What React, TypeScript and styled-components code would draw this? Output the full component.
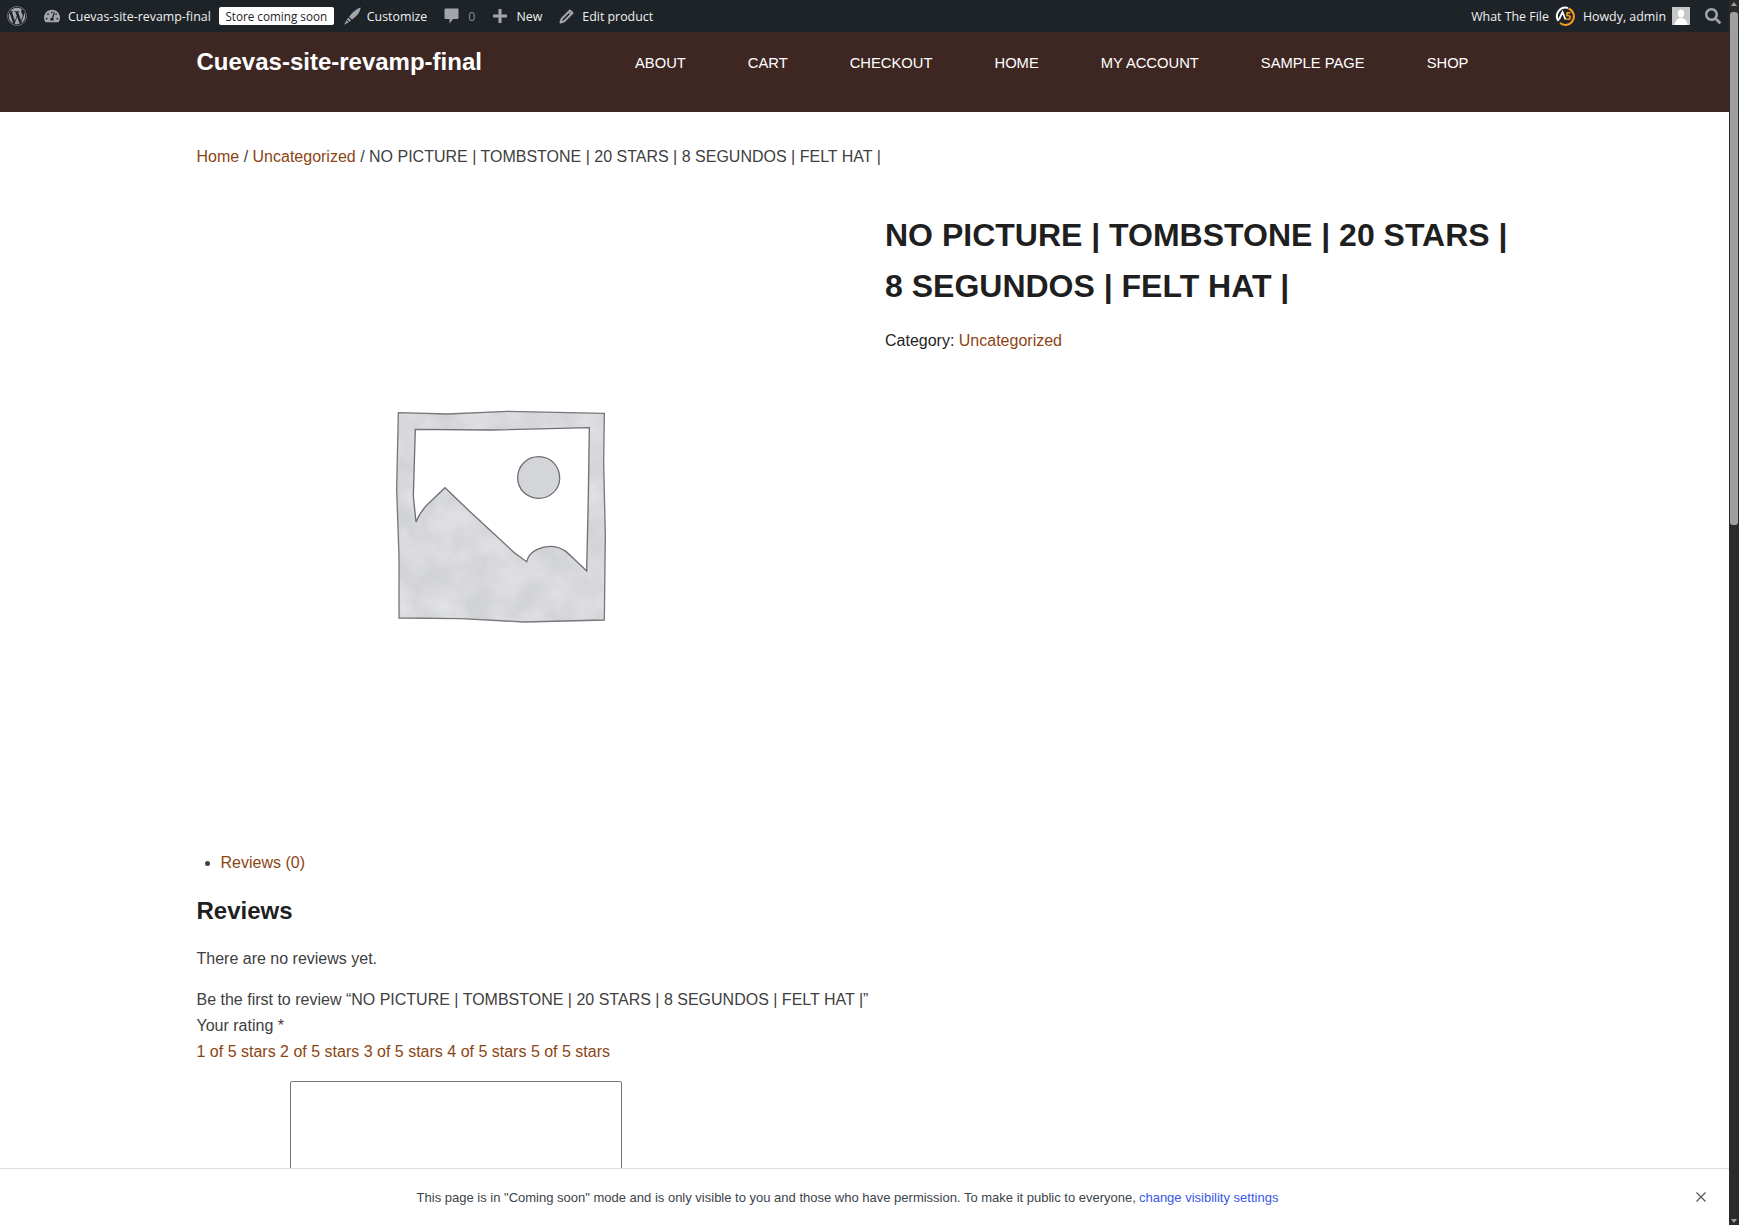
import React from "react";
import styled, { createGlobalStyle } from "styled-components";
import { FaWordpress, FaTachometerAlt, FaSearch } from "react-icons/fa";

const Global = createGlobalStyle`
  html, body {
    margin: 0;
    height: 100%;
    overflow: hidden;
    background: #fff;
  }
  * { box-sizing: border-box; }
`;

const AdminBar = styled.div`
  height: 32px;
  background: #1d2327;
  display: flex;
  align-items: center;
  justify-content: space-between;
  padding: 0 18px 0 7px;
  font-family: "Open Sans", sans-serif;
  font-size: 12.4px;
  color: #f0f0f1;
`;

const BarGroup = styled.div`
  display: flex;
  align-items: center;
`;

const BarItem = styled.span<{ $gap?: number; $ml?: number }>`
  display: flex;
  align-items: center;
  gap: ${(p) => p.$gap ?? 6}px;
  margin-left: ${(p) => p.$ml ?? 0}px;
  white-space: nowrap;
  svg { color: #a2a6aa; flex-shrink: 0; }
`;

const Badge = styled.span`
  background: #fff;
  color: #1d2327;
  border-radius: 2px;
  height: 18px;
  line-height: 18px;
  font-size: 11.7px;
  padding: 0 6px;
  margin-left: 8px;
  width: 115px;
  text-align: center;
  white-space: nowrap;
`;

const Muted = styled.span`
  color: #8c8f94;
`;

const Header = styled.header`
  height: 80px;
  background: #3e2723;
  padding: 0 196.5px;
  display: flex;
  align-items: flex-start;
  font-family: "Liberation Sans", Arial, sans-serif;
  color: #fff;
`;

const SiteTitle = styled.div`
  font-size: 24px;
  font-weight: 700;
  line-height: 30px;
  margin-top: 15px;
  width: 438.5px;
`;

const Nav = styled.nav`
  display: flex;
  gap: 62px;
  font-size: 14.75px;
  line-height: 18px;
  margin-top: 22px;
`;

const Main = styled.main`
  padding: 0 196.5px;
  font-family: "Liberation Sans", Arial, sans-serif;
  font-size: 16px;
  color: #404040;
`;

const Crumbs = styled.div`
  padding-top: 34px;
  line-height: 22px;
`;

const TextLink = styled.a`
  color: #8b4513;
  text-decoration: none;
`;

const Product = styled.div`
  display: grid;
  grid-template-columns: 608px 1fr;
  gap: 80.5px;
  margin-top: 41px;
`;

const Gallery = styled.div`
  height: 608px;
  padding: 5px 10px 0 0;
  display: flex;
  align-items: center;
  justify-content: center;
`;

const ProductTitle = styled.h1`
  margin: 1px 0 0;
  max-width: 630px;
  font-size: 32px;
  line-height: 51px;
  font-weight: 700;
  color: #1f1f1f;
`;

const Meta = styled.div`
  margin-top: 17px;
  line-height: 24px;
  color: #1f1f1f;
`;

const Tabs = styled.ul`
  margin: 34px 0 0;
  padding: 0 0 0 24px;
  line-height: 24px;
`;

const ReviewsTitle = styled.h2`
  margin: 21px 0 0;
  font-size: 24px;
  line-height: 30px;
  font-weight: 700;
  color: #1f1f1f;
`;

const Para = styled.p<{ $mt: number }>`
  margin: ${(p) => p.$mt}px 0 0;
  line-height: 26px;
`;

const Review = styled.textarea`
  display: block;
  width: 332px;
  height: 150px;
  margin: 16px 0 0 93.5px;
  border: 1px solid #767676;
  border-radius: 2px;
  background: #fff;
  resize: none;
`;

const Notice = styled.div`
  position: fixed;
  left: 0;
  right: 10px;
  bottom: 0;
  height: 57px;
  padding-right: 34px;
  background: #fff;
  border-top: 1px solid #dcdcde;
  display: flex;
  align-items: center;
  justify-content: center;
  font-family: "Liberation Sans", Arial, sans-serif;
  font-size: 13px;
  color: #3c434a;
`;

const NoticeLink = styled.a`
  color: #3858e9;
  margin-left: 3px;
`;

const Close = styled.span`
  position: absolute;
  right: 22px;
  top: 22px;
  display: flex;
  color: #555;
`;

const Scrollbar = styled.div`
  position: fixed;
  top: 0;
  right: 0;
  bottom: 0;
  width: 10px;
  background: #2b2b2b;
`;

const Thumb = styled.div`
  position: absolute;
  top: 12px;
  left: 1px;
  right: 1px;
  height: 513px;
  background: #9f9f9f;
  border-radius: 3px;
`;

const Arrow = styled.div<{ $down?: boolean }>`
  position: absolute;
  left: 2px;
  ${(p) => (p.$down ? "bottom: 2px;" : "top: 2px;")}
  width: 0;
  height: 0;
  border-left: 3px solid transparent;
  border-right: 3px solid transparent;
  ${(p) => (p.$down ? "border-top: 4px solid #9f9f9f;" : "border-bottom: 4px solid #9f9f9f;")}
`;

const BrushIcon = () => (
  <svg width="18" height="18" viewBox="0 0 18 18" fill="currentColor">
    <path d="M17.5 0.5 C17.8 4 14 9.5 9 12.5 L6 10 C9 5.5 14 1.5 17.5 0.5 Z" />
    <path d="M5.2 10.8 L8 13.3 L6.6 14.8 L3.8 12.6 Z" />
    <path d="M3.5 13.2 L5.8 15.2 L1 17.8 Z" />
  </svg>
);

const CommentIcon = () => (
  <svg width="15" height="16" viewBox="0 0 15 16" fill="currentColor">
    <path d="M1.5 0.5 H13.5 A1 1 0 0 1 14.5 1.5 V10 A1 1 0 0 1 13.5 11 H9 L5.5 15.5 V11 H1.5 A1 1 0 0 1 0.5 10 V1.5 A1 1 0 0 1 1.5 0.5 Z" />
  </svg>
);

const PlusIcon = () => (
  <svg width="14" height="14" viewBox="0 0 14 14" fill="currentColor">
    <path d="M5.5 0 H8.5 V5.5 H14 V8.5 H8.5 V14 H5.5 V8.5 H0 V5.5 H5.5 Z" />
  </svg>
);

const PencilIcon = () => (
  <svg width="15" height="15" viewBox="0 0 15 15" fill="none" stroke="currentColor">
    <path d="M11 1.5 L13.5 4 L5.2 12.3 L1.5 13.5 L2.7 9.8 Z" strokeWidth="2" strokeLinejoin="round" />
    <path d="M9.5 3 L12 5.5" strokeWidth="1.2" />
  </svg>
);

const UserAvatar = () => (
  <svg width="18" height="18" viewBox="0 0 18 18">
    <rect width="18" height="18" fill="#c6c6c6" />
    <ellipse cx="9" cy="6.5" rx="3.2" ry="4" fill="#fff" />
    <path d="M2.5 18 C3 13 6 12 7.5 11 H10.5 C12 12 15 13 15.5 18 Z" fill="#fff" />
  </svg>
);

const WtfLogo = () => (
  <svg width="20" height="20" viewBox="0 0 20 20" fill="none">
    <path d="M3.5 15 A8.5 8.5 0 0 1 13 2" stroke="#fff" strokeWidth="2" />
    <path d="M13.5 2.5 A8.5 8.5 0 1 1 5 17" stroke="#f5a01f" strokeWidth="2" />
    <path d="M4 13.5 L7.5 6 L10.5 13.5" stroke="#fff" strokeWidth="1.8" />
    <text x="10.5" y="13.5" fontSize="10" fontWeight="700" fill="#f5a01f" fontFamily="Open Sans, sans-serif">5</text>
  </svg>
);

const Placeholder = () => (
  <svg width="230" height="240" viewBox="0 0 690 720">
    <defs>
      <filter id="mottle" x="0" y="0" width="100%" height="100%">
        <feTurbulence type="fractalNoise" baseFrequency="0.012" numOctaves="3" seed="4" />
        <feColorMatrix values="0 0 0 0 0.86  0 0 0 0 0.865  0 0 0 0 0.88  0.9 0 0 0 -0.25" />
        <feComposite in2="SourceGraphic" operator="in" />
        <feMerge>
          <feMergeNode in="SourceGraphic" />
          <feMergeNode />
        </feMerge>
      </filter>
    </defs>
    <path
      d="M52 50 L200 54 L380 46 L670 52 L668 200 L673 420 L670 672 L430 678 L240 668 L54 666 L54 480 L47 280 Z"
      fill="#d2d3d7"
      filter="url(#mottle)"
    />
    <path
      d="M52 50 L200 54 L380 46 L670 52 L668 200 L673 420 L670 672 L430 678 L240 668 L54 666 L54 480 L47 280 Z"
      fill="none"
      stroke="#77787b"
      strokeWidth="4"
    />
    <path
      d="M103 100 L330 102 L625 95 L622 300 L617 525 L580 490 C560 470 545 455 520 452 C490 448 445 460 437 497 L400 470 L265 345 L192 275 L140 325 C125 340 112 360 105 378 L97 300 Z"
      fill="#fff"
      stroke="#6f7073"
      strokeWidth="4"
    />
    <path
      d="M473 182 C510 182 537 212 536 248 C535 282 505 308 472 307 C438 306 410 280 410 245 C410 210 438 182 473 182 Z"
      fill="#d4d5d9"
      stroke="#6f7073"
      strokeWidth="4"
    />
  </svg>
);

const navItems = ["ABOUT", "CART", "CHECKOUT", "HOME", "MY ACCOUNT", "SAMPLE PAGE", "SHOP"];

export default function App() {
  return (
    <>
      <Global />
      <AdminBar>
        <BarGroup>
          <BarItem><FaWordpress size={20} /></BarItem>
          <BarItem $ml={17} $gap={8}><FaTachometerAlt size={16} />Cuevas-site-revamp-final</BarItem>
          <Badge>Store coming soon</Badge>
          <BarItem $ml={9} $gap={6}><BrushIcon />Customize</BarItem>
          <BarItem $ml={17} $gap={9}><CommentIcon /><Muted>0</Muted></BarItem>
          <BarItem $ml={18} $gap={9}><PlusIcon />New</BarItem>
          <BarItem $ml={17} $gap={8}><PencilIcon />Edit product</BarItem>
        </BarGroup>
        <BarGroup>
          <BarItem $gap={6}>What The File <WtfLogo /></BarItem>
          <BarItem $ml={8} $gap={6}>
            Howdy, admin
            <UserAvatar />
          </BarItem>
          <BarItem $ml={15}><FaSearch size={16} /></BarItem>
        </BarGroup>
      </AdminBar>
      <Header>
        <SiteTitle>Cuevas-site-revamp-final</SiteTitle>
        <Nav>
          {navItems.map((item) => (
            <span key={item}>{item}</span>
          ))}
        </Nav>
      </Header>
      <Main>
        <Crumbs>
          <TextLink>Home</TextLink> / <TextLink>Uncategorized</TextLink> / NO PICTURE | TOMBSTONE | 20 STARS | 8 SEGUNDOS | FELT HAT |
        </Crumbs>
        <Product>
          <Gallery><Placeholder /></Gallery>
          <div>
            <ProductTitle>NO PICTURE | TOMBSTONE | 20 STARS | 8 SEGUNDOS | FELT HAT |</ProductTitle>
            <Meta>Category: <TextLink>Uncategorized</TextLink></Meta>
          </div>
        </Product>
        <Tabs><li><TextLink>Reviews (0)</TextLink></li></Tabs>
        <ReviewsTitle>Reviews</ReviewsTitle>
        <Para $mt={20}>There are no reviews yet.</Para>
        <Para $mt={15}>
          Be the first to review “NO PICTURE | TOMBSTONE | 20 STARS | 8 SEGUNDOS | FELT HAT |”
        </Para>
        <Para $mt={0}>Your rating *</Para>
        <Para $mt={0}>
          <TextLink>1 of 5 stars 2 of 5 stars 3 of 5 stars 4 of 5 stars 5 of 5 stars</TextLink>
        </Para>
        <Review />
      </Main>
      <Notice>
        This page is in "Coming soon" mode and is only visible to you and those who have permission. To make it public to everyone,
        <NoticeLink>change visibility settings</NoticeLink>
        <Close>
          <svg width="12" height="12" viewBox="0 0 12 12"><path d="M1.5 1.5 L10.5 10.5 M10.5 1.5 L1.5 10.5" stroke="currentColor" strokeWidth="1.2" /></svg>
        </Close>
      </Notice>
      <Scrollbar>
        <Arrow />
        <Thumb />
        <Arrow $down />
      </Scrollbar>
    </>
  );
}
